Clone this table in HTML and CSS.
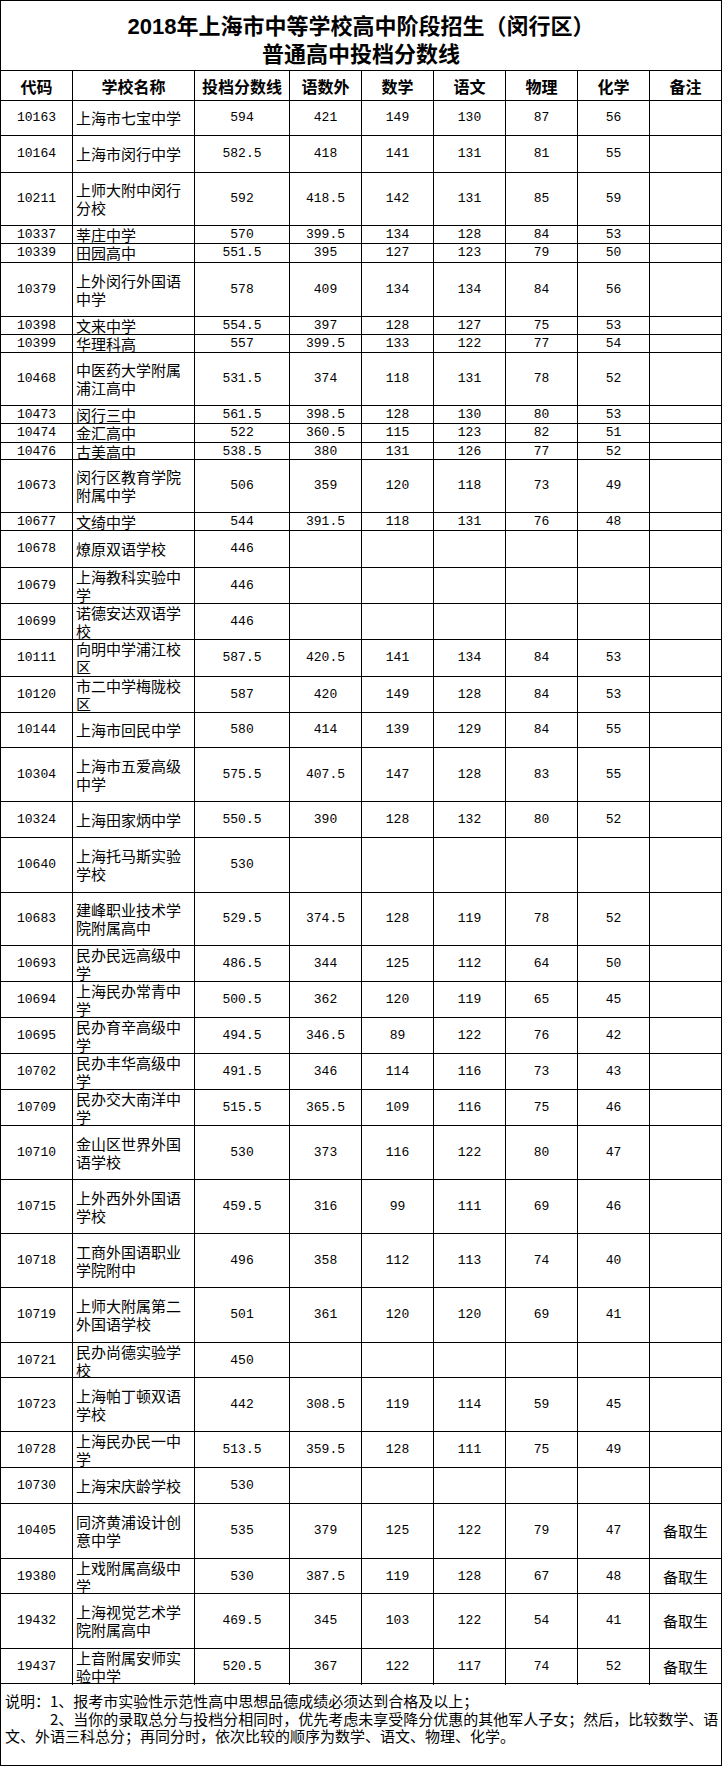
FILE: index.html
```html
<!DOCTYPE html>
<html lang="zh-CN">
<head>
<meta charset="utf-8">
<title>2018年上海市中等学校高中阶段招生（闵行区）普通高中投档分数线</title>
<link rel="stylesheet" href="styles.css">
</head>
<body>
<div class="sheet">
  <div class="title">
    <div class="tl">2018年上海市中等学校高中阶段招生（闵行区）</div>
    <div class="tl">普通高中投档分数线</div>
  </div>
  <div class="row head">
    <div class="c">代码</div><div class="c">学校名称</div><div class="c">投档分数线</div><div class="c">语数外</div><div class="c">数学</div><div class="c">语文</div><div class="c">物理</div><div class="c">化学</div><div class="c">备注</div>
  </div>

  <div class="row h35"><div class="c n">10163</div><div class="c nm">上海市七宝中学</div><div class="c n">594</div><div class="c n">421</div><div class="c n">149</div><div class="c n">130</div><div class="c n">87</div><div class="c n">56</div><div class="c"></div></div>
  <div class="row h37"><div class="c n">10164</div><div class="c nm">上海市闵行中学</div><div class="c n">582.5</div><div class="c n">418</div><div class="c n">141</div><div class="c n">131</div><div class="c n">81</div><div class="c n">55</div><div class="c"></div></div>
  <div class="row h53"><div class="c n">10211</div><div class="c nm">上师大附中闵行<br>分校</div><div class="c n">592</div><div class="c n">418.5</div><div class="c n">142</div><div class="c n">131</div><div class="c n">85</div><div class="c n">59</div><div class="c"></div></div>
  <div class="row h18"><div class="c n">10337</div><div class="c nm">莘庄中学</div><div class="c n">570</div><div class="c n">399.5</div><div class="c n">134</div><div class="c n">128</div><div class="c n">84</div><div class="c n">53</div><div class="c"></div></div>
  <div class="row h19"><div class="c n">10339</div><div class="c nm">田园高中</div><div class="c n">551.5</div><div class="c n">395</div><div class="c n">127</div><div class="c n">123</div><div class="c n">79</div><div class="c n">50</div><div class="c"></div></div>
  <div class="row h54"><div class="c n">10379</div><div class="c nm">上外闵行外国语<br>中学</div><div class="c n">578</div><div class="c n">409</div><div class="c n">134</div><div class="c n">134</div><div class="c n">84</div><div class="c n">56</div><div class="c"></div></div>
  <div class="row h18"><div class="c n">10398</div><div class="c nm">文来中学</div><div class="c n">554.5</div><div class="c n">397</div><div class="c n">128</div><div class="c n">127</div><div class="c n">75</div><div class="c n">53</div><div class="c"></div></div>
  <div class="row h18"><div class="c n">10399</div><div class="c nm">华理科高</div><div class="c n">557</div><div class="c n">399.5</div><div class="c n">133</div><div class="c n">122</div><div class="c n">77</div><div class="c n">54</div><div class="c"></div></div>
  <div class="row h53"><div class="c n">10468</div><div class="c nm">中医药大学附属<br>浦江高中</div><div class="c n">531.5</div><div class="c n">374</div><div class="c n">118</div><div class="c n">131</div><div class="c n">78</div><div class="c n">52</div><div class="c"></div></div>
  <div class="row h18"><div class="c n">10473</div><div class="c nm">闵行三中</div><div class="c n">561.5</div><div class="c n">398.5</div><div class="c n">128</div><div class="c n">130</div><div class="c n">80</div><div class="c n">53</div><div class="c"></div></div>
  <div class="row h19"><div class="c n">10474</div><div class="c nm">金汇高中</div><div class="c n">522</div><div class="c n">360.5</div><div class="c n">115</div><div class="c n">123</div><div class="c n">82</div><div class="c n">51</div><div class="c"></div></div>
  <div class="row h17"><div class="c n">10476</div><div class="c nm">古美高中</div><div class="c n">538.5</div><div class="c n">380</div><div class="c n">131</div><div class="c n">126</div><div class="c n">77</div><div class="c n">52</div><div class="c"></div></div>
  <div class="row h53"><div class="c n">10673</div><div class="c nm">闵行区教育学院<br>附属中学</div><div class="c n">506</div><div class="c n">359</div><div class="c n">120</div><div class="c n">118</div><div class="c n">73</div><div class="c n">49</div><div class="c"></div></div>
  <div class="row h18"><div class="c n">10677</div><div class="c nm">文绮中学</div><div class="c n">544</div><div class="c n">391.5</div><div class="c n">118</div><div class="c n">131</div><div class="c n">76</div><div class="c n">48</div><div class="c"></div></div>
  <div class="row h37"><div class="c n">10678</div><div class="c nm">燎原双语学校</div><div class="c n">446</div><div class="c"></div><div class="c"></div><div class="c"></div><div class="c"></div><div class="c"></div><div class="c"></div></div>
  <div class="row h36"><div class="c n">10679</div><div class="c nm">上海教科实验中<br>学</div><div class="c n">446</div><div class="c"></div><div class="c"></div><div class="c"></div><div class="c"></div><div class="c"></div><div class="c"></div></div>
  <div class="row h36"><div class="c n">10699</div><div class="c nm">诺德安达双语学<br>校</div><div class="c n">446</div><div class="c"></div><div class="c"></div><div class="c"></div><div class="c"></div><div class="c"></div><div class="c"></div></div>
  <div class="row h37"><div class="c n">10111</div><div class="c nm">向明中学浦江校<br>区</div><div class="c n">587.5</div><div class="c n">420.5</div><div class="c n">141</div><div class="c n">134</div><div class="c n">84</div><div class="c n">53</div><div class="c"></div></div>
  <div class="row h36"><div class="c n">10120</div><div class="c nm">市二中学梅陇校<br>区</div><div class="c n">587</div><div class="c n">420</div><div class="c n">149</div><div class="c n">128</div><div class="c n">84</div><div class="c n">53</div><div class="c"></div></div>
  <div class="row h35"><div class="c n">10144</div><div class="c nm">上海市回民中学</div><div class="c n">580</div><div class="c n">414</div><div class="c n">139</div><div class="c n">129</div><div class="c n">84</div><div class="c n">55</div><div class="c"></div></div>
  <div class="row h54"><div class="c n">10304</div><div class="c nm">上海市五爱高级<br>中学</div><div class="c n">575.5</div><div class="c n">407.5</div><div class="c n">147</div><div class="c n">128</div><div class="c n">83</div><div class="c n">55</div><div class="c"></div></div>
  <div class="row h36"><div class="c n">10324</div><div class="c nm">上海田家炳中学</div><div class="c n">550.5</div><div class="c n">390</div><div class="c n">128</div><div class="c n">132</div><div class="c n">80</div><div class="c n">52</div><div class="c"></div></div>
  <div class="row h55"><div class="c n">10640</div><div class="c nm">上海托马斯实验<br>学校</div><div class="c n">530</div><div class="c"></div><div class="c"></div><div class="c"></div><div class="c"></div><div class="c"></div><div class="c"></div></div>
  <div class="row h53"><div class="c n">10683</div><div class="c nm">建峰职业技术学<br>院附属高中</div><div class="c n">529.5</div><div class="c n">374.5</div><div class="c n">128</div><div class="c n">119</div><div class="c n">78</div><div class="c n">52</div><div class="c"></div></div>
  <div class="row h36"><div class="c n">10693</div><div class="c nm">民办民远高级中<br>学</div><div class="c n">486.5</div><div class="c n">344</div><div class="c n">125</div><div class="c n">112</div><div class="c n">64</div><div class="c n">50</div><div class="c"></div></div>
  <div class="row h36"><div class="c n">10694</div><div class="c nm">上海民办常青中<br>学</div><div class="c n">500.5</div><div class="c n">362</div><div class="c n">120</div><div class="c n">119</div><div class="c n">65</div><div class="c n">45</div><div class="c"></div></div>
  <div class="row h36"><div class="c n">10695</div><div class="c nm">民办育辛高级中<br>学</div><div class="c n">494.5</div><div class="c n">346.5</div><div class="c n">89</div><div class="c n">122</div><div class="c n">76</div><div class="c n">42</div><div class="c"></div></div>
  <div class="row h36"><div class="c n">10702</div><div class="c nm">民办丰华高级中<br>学</div><div class="c n">491.5</div><div class="c n">346</div><div class="c n">114</div><div class="c n">116</div><div class="c n">73</div><div class="c n">43</div><div class="c"></div></div>
  <div class="row h36"><div class="c n">10709</div><div class="c nm">民办交大南洋中<br>学</div><div class="c n">515.5</div><div class="c n">365.5</div><div class="c n">109</div><div class="c n">116</div><div class="c n">75</div><div class="c n">46</div><div class="c"></div></div>
  <div class="row h54"><div class="c n">10710</div><div class="c nm">金山区世界外国<br>语学校</div><div class="c n">530</div><div class="c n">373</div><div class="c n">116</div><div class="c n">122</div><div class="c n">80</div><div class="c n">47</div><div class="c"></div></div>
  <div class="row h54"><div class="c n">10715</div><div class="c nm">上外西外外国语<br>学校</div><div class="c n">459.5</div><div class="c n">316</div><div class="c n">99</div><div class="c n">111</div><div class="c n">69</div><div class="c n">46</div><div class="c"></div></div>
  <div class="row h54"><div class="c n">10718</div><div class="c nm">工商外国语职业<br>学院附中</div><div class="c n">496</div><div class="c n">358</div><div class="c n">112</div><div class="c n">113</div><div class="c n">74</div><div class="c n">40</div><div class="c"></div></div>
  <div class="row h55"><div class="c n">10719</div><div class="c nm">上师大附属第二<br>外国语学校</div><div class="c n">501</div><div class="c n">361</div><div class="c n">120</div><div class="c n">120</div><div class="c n">69</div><div class="c n">41</div><div class="c"></div></div>
  <div class="row h35"><div class="c n">10721</div><div class="c nm">民办尚德实验学<br>校</div><div class="c n">450</div><div class="c"></div><div class="c"></div><div class="c"></div><div class="c"></div><div class="c"></div><div class="c"></div></div>
  <div class="row h54"><div class="c n">10723</div><div class="c nm">上海帕丁顿双语<br>学校</div><div class="c n">442</div><div class="c n">308.5</div><div class="c n">119</div><div class="c n">114</div><div class="c n">59</div><div class="c n">45</div><div class="c"></div></div>
  <div class="row h36"><div class="c n">10728</div><div class="c nm">上海民办民一中<br>学</div><div class="c n">513.5</div><div class="c n">359.5</div><div class="c n">128</div><div class="c n">111</div><div class="c n">75</div><div class="c n">49</div><div class="c"></div></div>
  <div class="row h36"><div class="c n">10730</div><div class="c nm">上海宋庆龄学校</div><div class="c n">530</div><div class="c"></div><div class="c"></div><div class="c"></div><div class="c"></div><div class="c"></div><div class="c"></div></div>
  <div class="row h55"><div class="c n">10405</div><div class="c nm">同济黄浦设计创<br>意中学</div><div class="c n">535</div><div class="c n">379</div><div class="c n">125</div><div class="c n">122</div><div class="c n">79</div><div class="c n">47</div><div class="c rm">备取生</div></div>
  <div class="row h35"><div class="c n">19380</div><div class="c nm">上戏附属高级中<br>学</div><div class="c n">530</div><div class="c n">387.5</div><div class="c n">119</div><div class="c n">128</div><div class="c n">67</div><div class="c n">48</div><div class="c rm">备取生</div></div>
  <div class="row h55"><div class="c n">19432</div><div class="c nm">上海视觉艺术学<br>院附属高中</div><div class="c n">469.5</div><div class="c n">345</div><div class="c n">103</div><div class="c n">122</div><div class="c n">54</div><div class="c n">41</div><div class="c rm">备取生</div></div>
  <div class="row h35"><div class="c n">19437</div><div class="c nm">上音附属安师实<br>验中学</div><div class="c n">520.5</div><div class="c n">367</div><div class="c n">122</div><div class="c n">117</div><div class="c n">74</div><div class="c n">52</div><div class="c rm">备取生</div></div>

  <div class="notes">说明：1、报考市实验性示范性高中思想品德成绩必须达到合格及以上；<br><span class="ind">2、当你的录取总分与投档分相同时，优先考虑未享受降分优惠的其他军人子女；然后，比较数学、语</span><br>文、外语三科总分；再同分时，依次比较的顺序为数学、语文、物理、化学。</div>
</div>
</body>
</html>
```
FILE: styles.css
```css
html, body {
  margin: 0;
  padding: 0;
  background: #fff;
}

body {
  color: #000;
  font-family: "Noto Sans CJK SC", "Noto Sans", sans-serif;
}

.sheet {
  width: 722px;
  box-sizing: border-box;
  border-top: 1px solid #000;
  border-left: 1px solid #000;
}

.title {
  height: 70px;
  box-sizing: border-box;
  border-right: 1px solid #000;
  border-bottom: 1px solid #000;
  padding-top: 12px;
  display: flex;
  flex-direction: column;
  align-items: center;
  font-family: "Liberation Sans", "Noto Sans CJK SC", sans-serif;
  font-size: 22px;
  font-weight: 700;
}

.tl {
  height: 28px;
  line-height: 28px;
  white-space: nowrap;
}

.row {
  display: grid;
  grid-template-columns: 72px 122px 95px repeat(6, 72px);
  box-sizing: border-box;
  border-bottom: 1px solid #000;
}

.c {
  box-sizing: border-box;
  border-right: 1px solid #000;
  display: flex;
  align-items: center;
  justify-content: center;
  font-size: 15px;
  line-height: 18px;
  white-space: nowrap;
  min-width: 0;
}

.head {
  height: 30px;
}

.head .c {
  font-size: 16px;
  font-weight: 700;
}

.n {
  font-family: "Liberation Mono", "DejaVu Sans Mono", monospace;
  font-size: 13px;
}

.nm {
  justify-content: flex-start;
  padding-left: 3px;
}

.rm {
  font-size: 15px;
}

.h17 { height: 17px; }
.h18 { height: 18px; }
.h19 { height: 19px; }
.h35 { height: 35px; }
.h36 { height: 36px; }
.h37 { height: 37px; }
.h53 { height: 53px; }
.h54 { height: 54px; }
.h55 { height: 55px; }

.notes {
  height: 82px;
  box-sizing: border-box;
  border-right: 1px solid #000;
  border-bottom: 1px solid #000;
  padding: 8px 0 0 4px;
  font-size: 15px;
  line-height: 17.5px;
  white-space: nowrap;
}

.ind {
  padding-left: 45px;
}
```
